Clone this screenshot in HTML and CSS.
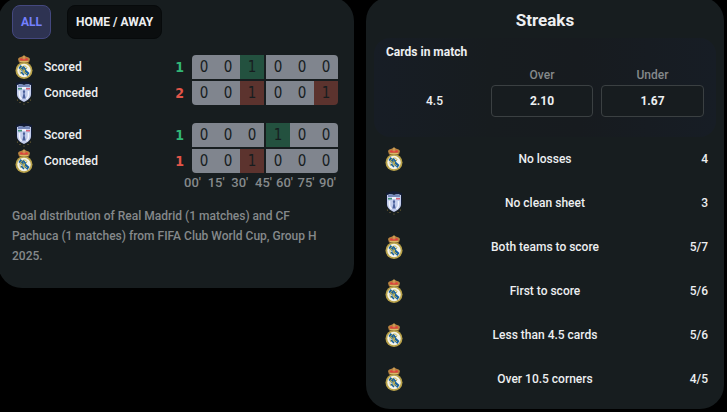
FILE: index.html
```html
<!DOCTYPE html>
<html lang="en">

<head>
    <meta charset="UTF-8">
    <meta name="viewport" content="width=device-width, initial-scale=1">
    <title>Goal distribution and streaks</title>
    <link rel="stylesheet" href="styles.css">
</head>

<body>
    <!-- Club crests -->
    <svg class="sprite" aria-hidden="true">
        <symbol id="madrid" viewBox="0 0 24 24">
            <path d="M7 7.500L6 4C6.500 2 9 2 10 1.400L12 .5l2 .9c1 .6 3.500 .6 4 2.600L17 7.500z" fill="#b98240" />
            <path d="M8 4l1.500-1 1 1.500 1.500-2 1.500 2 1-1.500L16 4l-.5 1.500h-7z" fill="#e33d3f" />
            <path d="M12 .5v4M8 6.500h8" stroke="#d8b867" fill="none" />
            <circle cx="12" cy="15.500" r="8.500" fill="#b9a24a" />
            <circle cx="12" cy="15.500" r="6.700" fill="#f3f3e9" />
            <path d="M6.500 13l2-3 9 8-2 3z" fill="#17609f" />
            <path d="M9 19c-2-3-1-7 3-8 2 0 3 1 3 2M9 14l6 5M12 12v7M15 13l-5 5" stroke="#cbb64d" fill="none" />
            <path d="M11 11.500l3 3M9 17l3 3" stroke="#17609f" stroke-width="1.500" />
        </symbol>
        <symbol id="pachuca" viewBox="0 0 24 24">
            <path d="M4 2l8-2 8 2v10c0 4-4 7-8 9-4-2-8-5-8-9z" fill="#121b33" />
            <path d="M5 4c2 0 2-1 3-1l4 1 4-1c1 0 1 1 3 1v9c0 4-3 6-7 8-4-2-7-4-7-8z" fill="#c2cceb" />
            <path d="M6 4l3-1 3 1 3-1 3 1v2H6z" fill="#7487b8" />
            <path d="M6 7h4v1.500H6z" fill="#3f8f77" />
            <path d="M14 7h4v1.500h-4z" fill="#d56278" />
            <path d="M10 6h4v2h-4z" fill="#eef1fa" />
            <path d="M7.500 10v4c0 2 1 3 2 4M16.500 10v4c0 2-1 3-2 4" stroke="#f3f5fd" stroke-width="1.500" fill="none" />
            <path d="M12 8.500l1.200 2-.7 2 1.200 5h-3.400l1.200-5-.7-2z" fill="#4a5f9b" />
            <g fill="#8b763a">
                <circle cx="5.500" cy="19" r=".6" />
                <circle cx="8" cy="21.500" r=".6" />
                <circle cx="12" cy="23" r=".6" />
                <circle cx="16" cy="21.500" r=".6" />
                <circle cx="18.500" cy="19" r=".6" />
            </g>
        </symbol>
    </svg>

    <main class="page">
        <section class="card goals">
            <div class="tabs">
                <button class="tab active" type="button">ALL</button>
                <button class="tab" type="button">HOME / AWAY</button>
            </div>

            <table class="distribution" aria-label="Real Madrid scored, Pachuca conceded">
                <tr>
                    <td class="team"><svg class="crest"><use href="#madrid" /></svg></td>
                    <th class="kind" scope="row">Scored</th>
                    <td class="total scored">1</td>
                    <td class="cell">0</td>
                    <td class="cell">0</td>
                    <td class="cell green">1</td>
                    <td class="cell half">0</td>
                    <td class="cell">0</td>
                    <td class="cell">0</td>
                </tr>
                <tr>
                    <td class="team"><svg class="crest"><use href="#pachuca" /></svg></td>
                    <th class="kind" scope="row">Conceded</th>
                    <td class="total conceded">2</td>
                    <td class="cell">0</td>
                    <td class="cell">0</td>
                    <td class="cell red">1</td>
                    <td class="cell half">0</td>
                    <td class="cell">0</td>
                    <td class="cell red">1</td>
                </tr>
            </table>

            <table class="distribution" aria-label="Pachuca scored, Real Madrid conceded">
                <tr>
                    <td class="team"><svg class="crest"><use href="#pachuca" /></svg></td>
                    <th class="kind" scope="row">Scored</th>
                    <td class="total scored">1</td>
                    <td class="cell">0</td>
                    <td class="cell">0</td>
                    <td class="cell">0</td>
                    <td class="cell half green">1</td>
                    <td class="cell">0</td>
                    <td class="cell">0</td>
                </tr>
                <tr>
                    <td class="team"><svg class="crest"><use href="#madrid" /></svg></td>
                    <th class="kind" scope="row">Conceded</th>
                    <td class="total conceded">1</td>
                    <td class="cell">0</td>
                    <td class="cell">0</td>
                    <td class="cell red">1</td>
                    <td class="cell half">0</td>
                    <td class="cell">0</td>
                    <td class="cell">0</td>
                </tr>
            </table>

            <div class="minutes">
                <div class="first-half"><span>00'</span><span>15'</span><span>30'</span><span>45'</span></div>
                <div class="second-half"><span>60'</span><span>75'</span><span>90'</span></div>
            </div>

            <p class="note">Goal distribution of Real Madrid (1 matches) and CF Pachuca (1 matches) from FIFA Club World Cup, Group H 2025.</p>
        </section>

        <section class="card streaks">
            <h2 class="title">Streaks</h2>

            <div class="odds">
                <h3 class="odds-title">Cards in match</h3>
                <div class="odds-grid">
                    <span class="line">4.5</span>
                    <div class="odd">
                        <label for="over">Over</label>
                        <button class="price" id="over" type="button">2.10</button>
                    </div>
                    <div class="odd">
                        <label for="under">Under</label>
                        <button class="price" id="under" type="button">1.67</button>
                    </div>
                </div>
            </div>

            <ul class="list">
                <li class="streak"><svg class="crest"><use href="#madrid" /></svg><span>No losses</span><span class="value">4</span></li>
                <li class="streak"><svg class="crest"><use href="#pachuca" /></svg><span>No clean sheet</span><span class="value">3</span></li>
                <li class="streak"><svg class="crest"><use href="#madrid" /></svg><span>Both teams to score</span><span class="value">5/7</span></li>
                <li class="streak"><svg class="crest"><use href="#madrid" /></svg><span>First to score</span><span class="value">5/6</span></li>
                <li class="streak"><svg class="crest"><use href="#madrid" /></svg><span>Less than 4.5 cards</span><span class="value">5/6</span></li>
                <li class="streak"><svg class="crest"><use href="#madrid" /></svg><span>Over 10.5 corners</span><span class="value">4/5</span></li>
            </ul>
        </section>
    </main>
</body>

</html>
```
FILE: styles.css
```css
* {
    padding: 0;
    margin: 0;
    box-sizing: border-box;
}

body {
    background: #000;
    color: #edeff1;
    font-family: Roboto, "Liberation Sans", sans-serif;
    font-size: 12px;
    font-weight: 500;
    line-height: 20px;
    overflow: hidden;
}

button {
    font: inherit;
    color: inherit;
    cursor: pointer;
}

.sprite {
    display: none;
}

/* the cards run slightly past the top and left edges */
.page {
    display: grid;
    grid-template-columns: 356fr 358fr;
    align-items: start;
    gap: 12px;
    margin: -3px 3px 0 -2px;
}

.card {
    background: #171d1f;
    border-radius: 24px;
}

.crest {
    display: block;
    width: 24px;
    height: 24px;
}

/* Goal distribution */
.goals {
    padding: 8px 16px 22px 14px;
}

.tabs {
    display: flex;
    gap: 16px;
    margin-bottom: 14px;
}

.tab {
    height: 34px;
    padding: 0 8px;
    border: 1px solid #070a0b;
    border-radius: 8px;
    background: #0b0e0f;
    font-weight: bold;
}

.tab.active {
    border-color: #44487f;
    background: #2e3352;
    color: #7480ff;
}

.distribution {
    width: 100%;
    table-layout: fixed;
    border-collapse: separate;
    border-spacing: 0 2px;
    margin-bottom: 14px;
}

.team {
    width: 32px;
}

.kind {
    font-weight: 500;
    text-align: left;
}

.total {
    width: 32px;
    padding-right: 8px;
    text-align: right;
    font-family: "DejaVu Sans Condensed", "DejaVu Sans", sans-serif;
    font-weight: bold;
    font-size: 14px;
}

.scored {
    color: #32b675;
}

.conceded {
    color: #e35548;
}

.cell {
    width: 24px;
    height: 24px;
    background: #80858e;
    color: #171d1f;
    text-align: center;
    font-family: "DejaVu Sans Condensed", "DejaVu Sans", sans-serif;
    font-size: 15px;
}

.cell.half {
    width: 26px;
    border-left: 2px solid #171d1f;
}

.green {
    background: #23513f;
}

.red {
    background: #5c332e;
}

tr:first-child .total + .cell {
    border-top-left-radius: 4px;
}

tr:first-child .cell:last-child {
    border-top-right-radius: 4px;
}

tr:last-child .total + .cell {
    border-bottom-left-radius: 4px;
}

tr:last-child .cell:last-child {
    border-bottom-right-radius: 4px;
}

.minutes {
    display: flex;
    justify-content: flex-end;
    gap: 4px;
    margin: -16px 2px 13px 0;
    color: #85898b;
    font-size: 13px;
}

.first-half,
.second-half {
    display: flex;
    justify-content: space-between;
    width: 88px;
}

.second-half {
    width: 60px;
}

.note {
    color: #85898b;
}

/* Streaks */
.streaks {
    padding: 13px 8px 8px;
}

.title {
    margin-bottom: 8px;
    text-align: center;
    font-size: 17px;
}

.odds {
    padding: 4px 12px 20px;
    border-radius: 16px;
    background: linear-gradient(90deg, #171d25, #171c1f 34%, #171b1f 60%, #171d25);
}

.odds-title {
    margin-bottom: 3px;
    font-size: 12px;
    font-weight: bold;
}

.odds-grid {
    display: grid;
    grid-template-columns: 97fr 102fr 103fr;
    align-items: end;
    gap: 8px;
}

.line {
    line-height: 32px;
    text-align: center;
}

.odd {
    display: flex;
    flex-direction: column;
    color: #85898b;
    text-align: center;
}

.price {
    height: 32px;
    border: 1px solid #3b4042;
    border-radius: 4px;
    background: #171c1f;
    color: #edeff1;
    font-weight: bold;
}

.list {
    list-style: none;
}

.streak {
    display: grid;
    grid-template-columns: 32px 1fr 32px;
    align-items: center;
    height: 44px;
    padding: 0 8px;
    text-align: center;
}

.value {
    text-align: right;
}
```
